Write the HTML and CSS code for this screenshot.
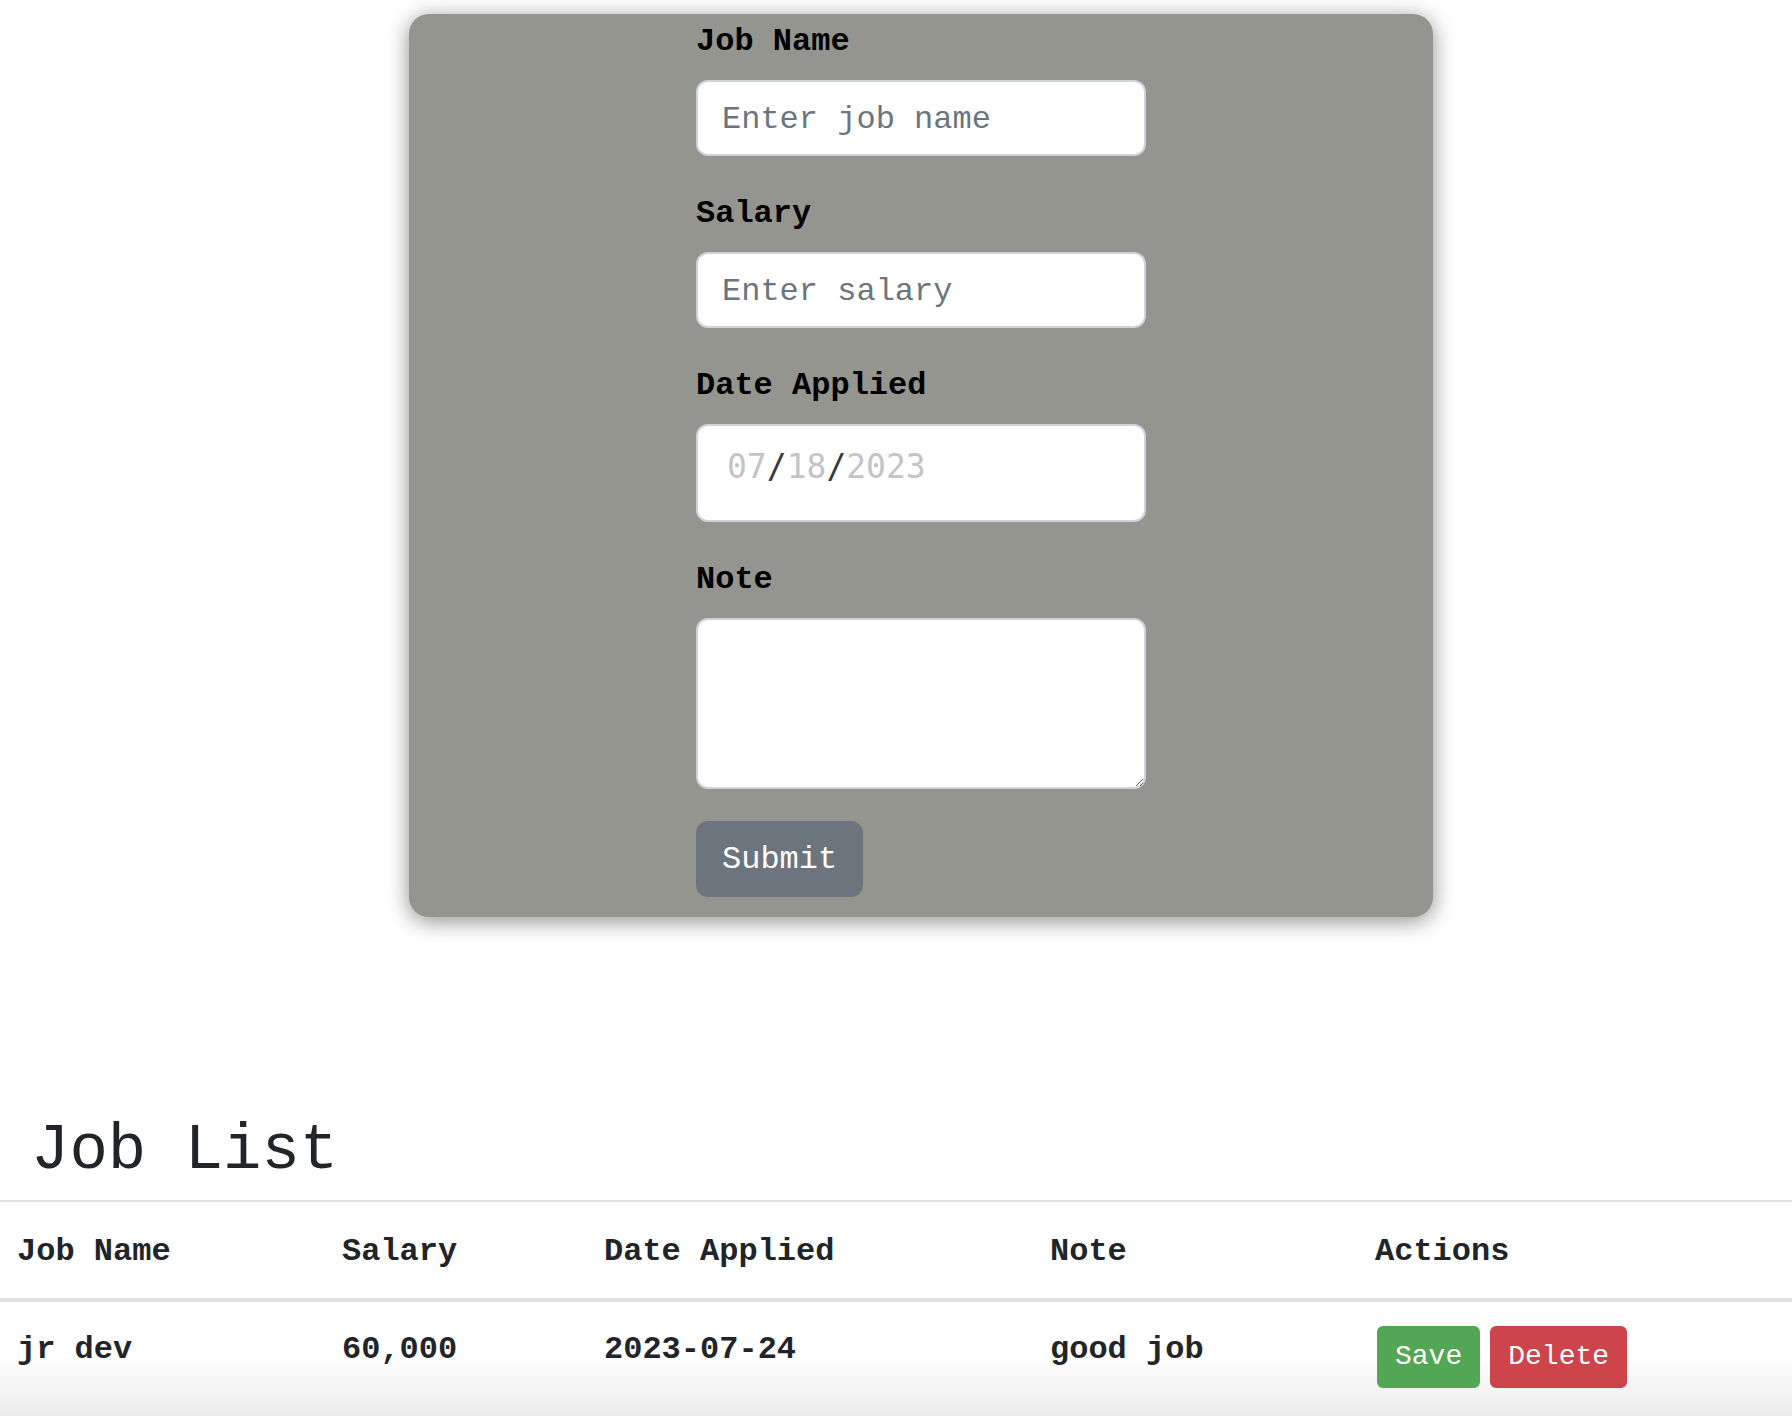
FILE: index.html
```html
<!DOCTYPE html>
<html lang="en">
<head>
<meta charset="utf-8">
<title>Job Tracker</title>
<link rel="stylesheet" href="styles.css">
</head>
<body>
<div class="card">
  <form class="form">
    <div class="field">
      <label class="label" for="job">Job Name</label>
      <input class="control" id="job" type="text" placeholder="Enter job name">
    </div>
    <div class="field">
      <label class="label" for="salary">Salary</label>
      <input class="control" id="salary" type="text" placeholder="Enter salary">
    </div>
    <div class="field">
      <label class="label">Date Applied</label>
      <div class="control date"><span class="dpart">07</span><span class="dsep">/</span><span class="dpart">18</span><span class="dsep">/</span><span class="dpart">2023</span></div>
    </div>
    <div class="field">
      <label class="label" for="note">Note</label>
      <textarea class="control note" id="note"></textarea>
    </div>
    <button class="submit" type="button">Submit</button>
  </form>
</div>

<h1 class="title">Job List</h1>

<table class="jobs">
  <colgroup>
    <col class="c1"><col class="c2"><col class="c3"><col class="c4"><col>
  </colgroup>
  <thead>
    <tr><th>Job Name</th><th>Salary</th><th>Date Applied</th><th>Note</th><th>Actions</th></tr>
  </thead>
  <tbody>
    <tr class="row">
      <td>jr dev</td><td>60,000</td><td>2023-07-24</td><td>good job</td>
      <td><div class="actions"><button class="btn save" type="button">Save</button><button class="btn delete" type="button">Delete</button></div></td>
    </tr>
  </tbody>
</table>
</body>
</html>
```

FILE: styles.css
```css
html, body {
  margin: 0;
  padding: 0;
  background: #fff;
}
body {
  font-family: "Liberation Mono", "Courier New", monospace;
  font-size: 32px;
  line-height: 1.5;
  color: #212529;
}

.card {
  box-sizing: border-box;
  width: 1024px;
  margin: 14px 0 0 409px;
  padding: 2px 0 20px;
  background: #959590;
  border-radius: 20px;
  box-shadow: 0 4px 22px rgba(0, 0, 0, 0.45);
  display: flex;
  justify-content: center;
}

.form {
  width: 450px;
  display: flex;
  flex-direction: column;
}

.field {
  display: flex;
  flex-direction: column;
  margin-bottom: 32px;
}

.label {
  font-weight: bold;
  color: #000;
  padding-top: 2px;
  margin-bottom: 14px;
}

.control {
  box-sizing: border-box;
  width: 100%;
  height: 76px;
  margin: 0;
  padding: 13px 24px 11px;
  border: 2px solid #ced4da;
  border-radius: 12px;
  background: #fff;
  font-family: "Liberation Mono", "Courier New", monospace;
  font-size: 32px;
  line-height: 1.5;
  color: #212529;
  outline: none;
}
.control::placeholder {
  color: #6c757d;
  opacity: 1;
}

.date {
  height: 98px;
  padding: 17px 24px 0 29px;
  font-family: "DejaVu Sans Mono", monospace;
  font-size: 33px;
  line-height: 48px;
  white-space: nowrap;
}
.dpart { color: #c3c4c8; }
.dsep { color: #3a3a3a; }

.note {
  height: 171px;
  resize: vertical;
  display: block;
}

.submit {
  align-self: flex-start;
  margin: 0;
  padding: 13px 24px 11px;
  border: 2px solid #6c757d;
  border-radius: 12px;
  background: #6c757d;
  color: #fff;
  font-family: "Liberation Mono", "Courier New", monospace;
  font-size: 32px;
  line-height: 1.5;
}

.title {
  margin: 196px 0 10px;
  padding-left: 31px;
  font-size: 64px;
  font-weight: normal;
  line-height: 1.2;
  color: #212529;
}

.jobs {
  width: 100%;
  table-layout: fixed;
  border-collapse: separate;
  border-spacing: 0;
}
.c1 { width: 325px; }
.c2 { width: 262px; }
.c3 { width: 446px; }
.c4 { width: 325px; }

.jobs th,
.jobs td {
  text-align: left;
  vertical-align: top;
  font-weight: bold;
  color: #212529;
  padding: 26px 16px 22px 17px;
}
.jobs th {
  border-top: 2px solid #dee2e6;
  border-bottom: 4px solid #dee2e6;
}
.jobs td {
  padding: 24px 16px 30px 17px;
}
.row {
  background: linear-gradient(to bottom, #ffffff 0%, #ffffff 45%, #ebebeb 100%);
}

.actions {
  display: flex;
  gap: 10px;
  margin-left: 2px;
}
.btn {
  margin: 0;
  padding: 8px 16px;
  border: 2px solid transparent;
  border-radius: 6px;
  color: #fff;
  font-family: "Liberation Mono", "Courier New", monospace;
  font-size: 28px;
  line-height: 1.5;
}
.save { background: #53a653; border-color: #53a653; }
.delete { background: #cd444b; border-color: #cd444b; }
```
